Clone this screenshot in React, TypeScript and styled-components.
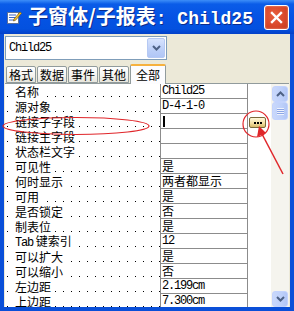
import styled, { createGlobalStyle } from 'styled-components';

const GlobalStyle = createGlobalStyle`
  html, body { margin: 0; padding: 0; background: #fff; }
  body { width: 294px; height: 311px; overflow: hidden; }
`;

const CJK = '"Noto Sans CJK SC", "Noto Sans", sans-serif';
const MONO = '"Liberation Mono", "Noto Sans CJK SC", monospace';

const Window = styled.div`
  position: relative;
  width: 294px;
  height: 311px;
  display: flex;
  flex-direction: column;
  background: #0a4fd8;
  overflow: hidden;
`;

const TitleBar = styled.div`
  height: 34px;
  flex: none;
  display: flex;
  align-items: center;
  padding: 0 5px 0 6px;
  background: linear-gradient(180deg, #3d8ef8 0%, #0a5ce8 12%, #0553e4 50%, #0351df 85%, #0340c8 100%);
`;

const TitleText = styled.div`
  flex: 1;
  margin-left: 6px;
  color: #fff;
  font-family: ${CJK};
  font-size: 20px;
  font-weight: 700;
  line-height: 22px;
  white-space: nowrap;
  text-shadow: 1px 1px 0 #0b2c8c;
`;

const TitleMono = styled.span`
  font-family: ${MONO};
  font-size: 18px;
`;

const CloseButton = styled.div`
  width: 23px;
  height: 23px;
  border: 1px solid #fff;
  border-radius: 3px;
  display: flex;
  align-items: center;
  justify-content: center;
  background: radial-gradient(circle at 40% 40%, #e8603f 0%, #d9482a 55%, #c23a1c 100%);
  box-shadow: inset 0 0 2px #f7b39c;
`;

const Body = styled.div`
  flex: 1;
  margin: 0 4px 4px;
  background: #ece9d8;
  display: flex;
  flex-direction: column;
  padding: 2px 1px 0 1px;
  min-height: 0;
`;

const Combo = styled.div`
  width: 156px;
  height: 22px;
  border: 1px solid #7f9db9;
  background: #fff;
  display: flex;
  align-items: center;
  justify-content: space-between;
  padding: 0 1px 0 3px;
  font-family: ${MONO};
  font-size: 12px;
  letter-spacing: -1.2px;
`;

const ComboButton = styled.div`
  width: 16px;
  height: 18px;
  border-radius: 2px;
  background: linear-gradient(180deg, #d7e3fd 0%, #bccff8 60%, #b0c6f6 100%);
  border: 1px solid #b6c9f3;
  display: flex;
  align-items: center;
  justify-content: center;
  letter-spacing: 0;
`;

const Tabs = styled.div`
  margin-top: 4px;
  height: 19px;
  display: flex;
  align-items: flex-end;
  padding-left: 1px;
`;

const Tab = styled.div<{ $active?: boolean }>`
  height: ${(p) => (p.$active ? 20 : 17)}px;
  box-sizing: border-box;
  padding: ${(p) => (p.$active ? '1px 5px 0' : '0 2px')};
  margin-right: 1px;
  margin-bottom: ${(p) => (p.$active ? -1 : 0)}px;
  border: 1px solid #919b9c;
  border-bottom: ${(p) => (p.$active ? 'none' : '1px solid #919b9c')};
  border-top: ${(p) => (p.$active ? '2px solid #f6b13e' : '1px solid #919b9c')};
  border-radius: 2px 2px 0 0;
  background: ${(p) => (p.$active ? '#fcfcfe' : 'linear-gradient(180deg, #fff 0%, #f4f3ee 60%, #e7e5dc 100%)')};
  font-family: ${CJK};
  font-size: 12px;
  line-height: 15px;
  color: #000;
  position: relative;
  z-index: ${(p) => (p.$active ? 1 : 0)};
`;

const Page = styled.div`
  flex: 1;
  min-height: 0;
  border-top: 1px solid #919b9c;
  background: #fff;
  display: flex;
  overflow: hidden;
`;

const Grid = styled.div`
  width: 264px;
  flex: none;
  display: flex;
  flex-direction: column;
`;

const Row = styled.div`
  height: 15px;
  flex: none;
  display: flex;
`;

const LabelCell = styled.div`
  width: 155px;
  box-sizing: border-box;
  padding-left: 10px;
  background-image: linear-gradient(to right, #000 1px, transparent 1px);
  background-size: 8px 1px;
  background-repeat: repeat-x;
  background-position: 2px 12px;
  display: flex;
  align-items: center;
`;

const Label = styled.span`
  background: #fff;
  padding-right: 4px;
  font-family: ${CJK};
  font-size: 12px;
  line-height: 14px;
  white-space: nowrap;
`;

const ValueCell = styled.div`
  width: 88px;
  box-sizing: border-box;
  border-left: 1px solid #8c8c8c;
  border-right: 1px solid #8c8c8c;
  border-bottom: 1px solid #8c8c8c;
  padding-left: 1px;
  font-family: ${CJK};
  font-size: 12px;
  line-height: 14px;
  white-space: nowrap;
  display: flex;
  align-items: center;
`;

const Mono = styled.span`
  font-family: ${MONO};
  font-size: 12px;
  letter-spacing: -1.2px;
`;

const Caret = styled.span`
  width: 2px;
  height: 11px;
  background: #000;
  margin-left: 1px;
`;

const Spare = styled.div`
  flex: 1;
  position: relative;
`;

const EllipsisButton = styled.div`
  position: absolute;
  left: 1px;
  top: 3px;
  width: 17px;
  height: 11px;
  box-sizing: border-box;
  border: 1px solid #7a6a3a;
  border-radius: 2px;
  background: linear-gradient(180deg, #fff8dc 0%, #f2dea0 60%, #d7b868 100%);
  display: flex;
  align-items: center;
  justify-content: center;
  gap: 1px;
`;

const Dot = styled.span`
  width: 2px;
  height: 2px;
  background: #000;
`;

const ScrollBar = styled.div`
  width: 18px;
  margin-left: 2px;
  background: #f5f4ee;
  display: flex;
  flex-direction: column;
  align-items: center;
  padding-top: 2px;
`;

const ScrollBtn = styled.div<{ $grow?: number }>`
  width: 16px;
  height: ${(p) => p.$grow ?? 16}px;
  box-sizing: border-box;
  border: 1px solid #c3d3fd;
  border-radius: 3px;
  background: linear-gradient(90deg, #c9d8fb 0%, #bed0fa 60%, #b2c6f6 100%);
  display: flex;
  align-items: center;
  justify-content: center;
  flex: none;
`;

const Grip = styled.div`
  width: 7px;
  height: 7px;
  background: repeating-linear-gradient(180deg, #eef2fd 0 1px, #8ca6e6 1px 2px);
`;

const Track = styled.div`
  flex: 1;
`;

const Overlay = styled.svg`
  position: absolute;
  left: 0;
  top: 0;
  pointer-events: none;
`;

const rows: { label: React.ReactNode; value: React.ReactNode }[] = [
  { label: '名称', value: <Mono>Child25</Mono> },
  { label: '源对象', value: <Mono>D-4-1-0</Mono> },
  { label: '链接子字段', value: <Caret /> },
  { label: '链接主字段', value: '' },
  { label: '状态栏文字', value: '' },
  { label: '可见性', value: '是' },
  { label: '何时显示', value: '两者都显示' },
  { label: '可用', value: '是' },
  { label: '是否锁定', value: '否' },
  { label: '制表位', value: '是' },
  { label: <><Mono>Tab</Mono> 键索引</>, value: <Mono>12</Mono> },
  { label: '可以扩大', value: '是' },
  { label: '可以缩小', value: '否' },
  { label: '左边距', value: <Mono>2.199cm</Mono> },
  { label: '上边距', value: <Mono>7.300cm</Mono> },
];

function FormIcon() {
  return (
    <svg width="16" height="16" viewBox="0 0 16 16">
      <rect x="1.5" y="3.5" width="11" height="11" fill="#fff" stroke="#5a6f9a" />
      <path d="M3 6h7M3 8.5h7M3 11h5" stroke="#3a64c8" strokeWidth="1" />
      <path d="M8 10l6-7 1.5 1.3-6 7-2 .7z" fill="#f2c230" stroke="#7a5a10" strokeWidth="0.7" />
    </svg>
  );
}

export default function App() {
  return (
    <>
      <GlobalStyle />
      <Window>
        <TitleBar>
          <FormIcon />
          <TitleText>
            子窗体/子报表<TitleMono>: Child25</TitleMono>
          </TitleText>
          <CloseButton>
            <svg width="13" height="13" viewBox="0 0 13 13">
              <path d="M2 2l9 9M11 2l-9 9" stroke="#fff" strokeWidth="2.4" strokeLinecap="square" />
            </svg>
          </CloseButton>
        </TitleBar>
        <Body>
          <Combo>
            Child25
            <ComboButton>
              <svg width="9" height="6" viewBox="0 0 9 6">
                <path d="M1 1l3.5 3.5L8 1" fill="none" stroke="#4d6185" strokeWidth="2" />
              </svg>
            </ComboButton>
          </Combo>
          <Tabs>
            <Tab>格式</Tab>
            <Tab>数据</Tab>
            <Tab>事件</Tab>
            <Tab>其他</Tab>
            <Tab $active>全部</Tab>
          </Tabs>
          <Page>
            <Grid>
              {rows.map((r, i) => (
                <Row key={i}>
                  <LabelCell>
                    <Label>{r.label}</Label>
                  </LabelCell>
                  <ValueCell>{r.value}</ValueCell>
                  <Spare>
                    {i === 2 && (
                      <EllipsisButton>
                        <Dot />
                        <Dot />
                        <Dot />
                      </EllipsisButton>
                    )}
                  </Spare>
                </Row>
              ))}
            </Grid>
            <ScrollBar>
              <ScrollBtn>
                <svg width="9" height="6" viewBox="0 0 9 6">
                  <path d="M1 5l3.5-3.5L8 5" fill="none" stroke="#4d6185" strokeWidth="2" />
                </svg>
              </ScrollBtn>
              <ScrollBtn $grow={18}>
                <Grip />
              </ScrollBtn>
              <Track />
              <ScrollBtn>
                <svg width="9" height="6" viewBox="0 0 9 6">
                  <path d="M1 1l3.5 3.5L8 1" fill="none" stroke="#4d6185" strokeWidth="2" />
                </svg>
              </ScrollBtn>
            </ScrollBar>
          </Page>
        </Body>
        <Overlay width="294" height="311" viewBox="0 0 294 311">
          <ellipse cx="76" cy="126" rx="73" ry="8.5" fill="none" stroke="#e0262a" strokeWidth="1.2" />
          <circle cx="256" cy="124" r="13" fill="none" stroke="#e0262a" strokeWidth="1.2" />
          <path d="M283 174L262 134" stroke="#e0262a" strokeWidth="1.5" />
          <path d="M259 126l-2 11 9-4z" fill="#e0262a" />
        </Overlay>
      </Window>
    </>
  );
}
